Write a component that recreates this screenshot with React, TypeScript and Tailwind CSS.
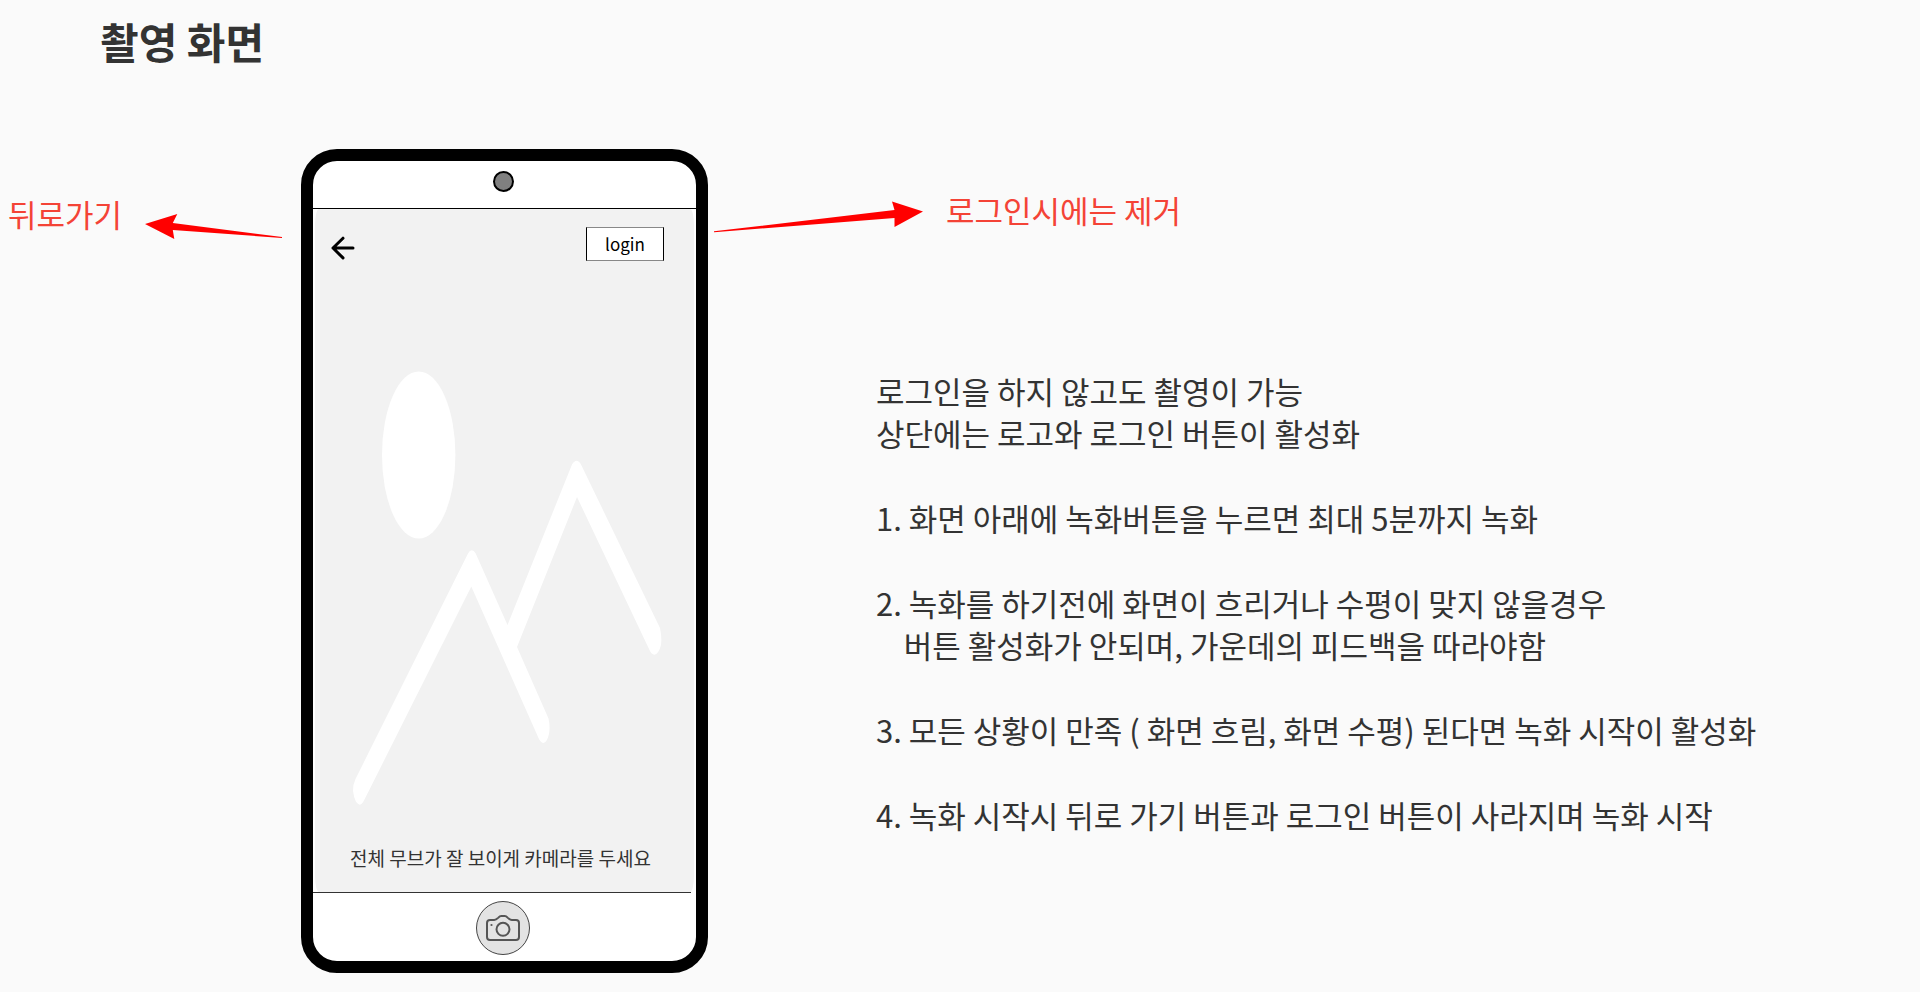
import React from "react";

const notes = [
  ["로그인을 하지 않고도 촬영이 가능", "상단에는 로고와 로그인 버튼이 활성화"],
  ["1. 화면 아래에 녹화버튼을 누르면 최대 5분까지 녹화"],
  ["2. 녹화를 하기전에 화면이 흐리거나 수평이 맞지 않을경우", "    버튼 활성화가 안되며, 가운데의 피드백을 따라야함"],
  ["3. 모든 상황이 만족 ( 화면 흐림, 화면 수평) 된다면 녹화 시작이 활성화"],
  ["4. 녹화 시작시 뒤로 가기 버튼과 로그인 버튼이 사라지며 녹화 시작"],
];

function BackIcon() {
  return (
    <svg viewBox="0 0 24 24" className="h-6 w-6" fill="none" stroke="#000" strokeWidth="3" strokeLinecap="round" strokeLinejoin="round" aria-hidden="true">
      <path d="M22 12H2M12 2.2L2 12l10 9.900" />
    </svg>
  );
}

function CameraIcon() {
  return (
    <svg viewBox="0 0 34 26" className="h-[26px] w-[34px]" fill="none" stroke="#555" strokeWidth="2" strokeLinejoin="round" aria-hidden="true">
      <path d="M4 5H8.200c2 0 3-1.200 4.200-2.400C13.400 1.400 14.200 1 15.300 1h3.400c1.100 0 1.900.4 2.900 1.600C22.800 3.800 23.800 5 25.800 5H30c2 0 3 1 3 3v14c0 2-1 3-3 3H4c-2 0-3-1-3-3V8c0-2 1-3 3-3z" />
      <circle cx="17" cy="14.300" r="6.500" />
      <circle cx="5.500" cy="10" r="1.100" fill="#555" stroke="none" />
    </svg>
  );
}

function Preview() {
  return (
    <svg viewBox="0 0 340 470" className="mt-[89px] ml-[25px] block h-[470px] w-[340px]" fill="#fff" aria-hidden="true">
      <ellipse cx="78.700" cy="105" rx="36.700" ry="83.500" />
      <path d="M15.500 429L128 203.500Q131.700 197 135.700 203.500L167.500 275L232 114.500Q236.700 107 241 114.500L320 278Q322 287 321 295Q318.500 304.500 314.300 304.700Q311.500 304.500 309.500 300L237 147L177 297L208.500 368.500Q210.300 376 209 384Q207 392.500 203.300 393Q200.500 392.500 198.500 388L131.300 236.500L24 450.500Q21.500 454.800 19.500 454.800Q14.800 453.500 13 441Q13 434 15.500 429Z" />
    </svg>
  );
}

function Phone() {
  return (
    <section aria-label="촬영 화면 미리보기" className="flex h-[824px] w-[407px] shrink-0 flex-col overflow-hidden rounded-[36px] border-12 border-black bg-white">
      <div className="flex h-[48px] items-center justify-center border-b border-black pr-[2px] pb-[6px]">
        <span className="h-[21px] w-[21px] rounded-full border-2 border-black bg-[#808080]" />
      </div>
      <div className="mx-[2px] flex grow flex-col rounded-[4px/16px] bg-[#f2f2f2]">
        <div className="flex items-start justify-between pt-[18px] pr-[30px] pl-4">
          <button type="button" aria-label="뒤로 가기" className="mt-[9px]">
            <BackIcon />
          </button>
          <button type="button" className="h-[34px] w-[78px] border border-x-black border-y-[#888] bg-white text-[17px] leading-[30px] text-black">
            login
          </button>
        </div>
        <Preview />
        <p className="mt-[24px] pr-[8px] text-center text-[19px] leading-[28px]">전체 무브가 잘 보이게 카메라를 두세요</p>
      </div>
      <div className="mr-[5px] border-t border-[#333]" />
      <div className="flex h-[68px] items-center justify-center pt-[2px] pr-[4px]">
        <button type="button" aria-label="녹화" className="flex h-[54px] w-[54px] items-center justify-center rounded-full border border-[#444] bg-[#e3e3e3]">
          <CameraIcon />
        </button>
      </div>
    </section>
  );
}

export default function App() {
  return (
    <main className="min-h-screen bg-[#fafafa] font-['Noto_Sans_CJK_KR',sans-serif] text-[#333]">
      <h1 className="pt-[10px] pl-[100px] text-[42px] leading-[62px] font-bold">촬영 화면</h1>
      <div className="flex items-start pt-[77px]">
        <div className="flex w-[301px] shrink-0 items-start pt-[41px] pl-2">
          <p className="w-[120px] text-[31px] leading-[48px] text-[#f44336]">뒤로가기</p>
          <svg viewBox="0 0 140 28" className="mt-[22px] ml-[16px] h-[28px] w-[140px]" fill="#f00" aria-hidden="true">
            <path d="M1 12L33.300 2L28.800 11L138 25V26L28.800 18L30.300 27Z" />
          </svg>
        </div>
        <Phone />
        <div className="min-w-0 grow">
          <div className="flex items-start pt-[37px] pl-[6px]">
            <svg viewBox="0 0 210 34" className="mt-[14px] h-[34px] w-[210px]" fill="#f00" aria-hidden="true">
              <path d="M0 31.300L180.500 10L178 1.500L209 11.500L180.500 27L180.500 18L0 32.300Z" />
            </svg>
            <p className="ml-[22px] text-[31px] leading-[48px] text-[#f44336]">로그인시에는 제거</p>
          </div>
          <div className="flex flex-col gap-[43px] pt-[136px] pl-[168px] text-[31px] leading-[42px]">
            {notes.map((lines) => (
              <p key={lines[0]} className="whitespace-pre">
                {lines.join("\n")}
              </p>
            ))}
          </div>
        </div>
      </div>
    </main>
  );
}
